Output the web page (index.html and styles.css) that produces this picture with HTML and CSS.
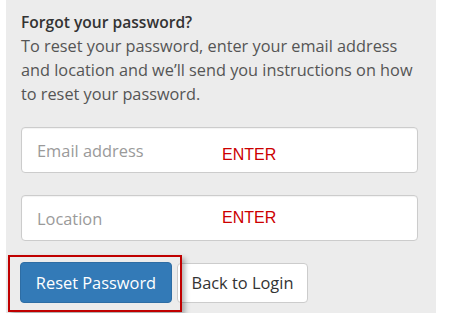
FILE: index.html
```html
<!DOCTYPE html>
<html>

<head>
    <meta charset="utf-8">
    <title>Forgot password</title>
    <link rel="stylesheet" href="styles.css">
</head>

<body>
<div class="panel">
    <div class="intro">
        <h4 class="intro-title">Forgot your password?</h4>
        <p class="intro-text">To reset your password, enter your email address and location and we’ll send you instructions on how to reset your password.</p>
    </div>

    <div class="field">
        <input type="text" class="field-input" placeholder="Email address">
        <span class="note note-email">ENTER</span>
    </div>
    <div class="field">
        <input type="text" class="field-input" placeholder="Location">
        <span class="note note-location">ENTER</span>
    </div>

    <div class="actions">
        <button type="button" class="btn btn-primary">Reset Password</button>
        <button type="button" class="btn btn-default">Back to Login</button>
        <div class="highlight"></div>
    </div>
</div>
</body>

</html>
```

FILE: styles.css
```css
html, body {
    margin: 0;
    padding: 0;
    background: #fff;
}

body {
    font-family: "Open Sans", "Liberation Sans", sans-serif;
    font-size: 16.3px;
    color: #555;
}

.panel {
    margin-left: 6px;
    width: 430px;
    height: 313px;
    box-sizing: border-box;
    padding: 10px 18px 0 15px;
    background: #ececec;
}

.intro-title {
    margin: 0;
    font-size: 15.6px;
    line-height: 24px;
    font-weight: 600;
    color: #333;
}

.intro-text {
    margin: 0;
    line-height: 24px;
    color: #555;
}

.field {
    position: relative;
    margin-top: 21px;
}

.field + .field {
    margin-top: 22px;
}

.field-input {
    display: block;
    width: 100%;
    height: 46px;
    box-sizing: border-box;
    padding: 0 15px;
    border: 1px solid #ccc;
    border-radius: 4px;
    background: #fff;
    font-family: "Open Sans", "Liberation Sans", sans-serif;
    font-size: 16.4px;
    color: #555;
    box-shadow: inset 0 1px 1px rgba(0, 0, 0, 0.05);
}

.field-input::placeholder {
    color: #9a9a9a;
}

.note {
    position: absolute;
    left: 201px;
    font-family: "Liberation Sans", Arial, sans-serif;
    font-size: 16px;
    line-height: 18px;
    color: #cc0000;
}

.note-email {
    top: 19px;
}

.note-location {
    top: 14px;
}

.actions {
    position: relative;
    display: flex;
    align-items: center;
    gap: 5px;
    margin-top: 21px;
    margin-left: -1px;
}

.btn {
    height: 41px;
    box-sizing: border-box;
    padding: 0 10px;
    border: 1px solid transparent;
    border-radius: 4px;
    font-family: "Open Sans", "Liberation Sans", sans-serif;
    font-size: 16.4px;
    cursor: pointer;
}

.btn-primary {
    width: 152px;
    background: #337ab7;
    border-color: #2e6da4;
    color: #fff;
}

.btn-default {
    width: 131px;
    height: 40px;
    background: #fff;
    border-color: #ccc;
    color: #333;
}

.highlight {
    position: absolute;
    left: -12px;
    top: -7px;
    width: 174px;
    height: 57px;
    box-sizing: border-box;
    border: 2px solid #c00000;
    box-shadow: 3px 3px 5px rgba(0, 0, 0, 0.3);
    pointer-events: none;
}
```
